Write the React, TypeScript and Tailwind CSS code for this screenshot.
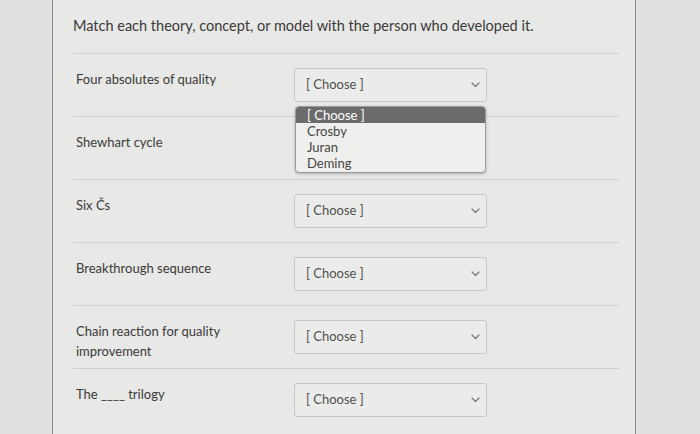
const ROWS = [
  { label: "Four absolutes of quality", open: true },
  { label: "Shewhart cycle", hidden: true },
  { label: "Six Čs" },
  { label: "Breakthrough sequence" },
  { label: "Chain reaction for quality improvement" },
  { label: "The ____ trilogy" },
];

const OPTIONS = ["[ Choose ]", "Crosby", "Juran", "Deming"];

function Chevron() {
  return (
    <svg width="9" height="6" viewBox="0 0 9 6" fill="none" className="shrink-0">
      <path d="M1 1l3.5 3.5L8 1" stroke="#777" strokeWidth="1.2" strokeLinecap="round" strokeLinejoin="round" />
    </svg>
  );
}

function Select({ open, hidden }: { open?: boolean; hidden?: boolean }) {
  return (
    <div className="relative">
      <div
        className={`w-[193px] h-[34px] flex items-center justify-between pl-[11px] pr-[6px] rounded-[3px] border border-[#c6c6c4] bg-[#ebebe9] ${hidden ? "invisible" : ""}`}
      >
        <span className="text-[13px] text-[#505050]">[ Choose ]</span>
        <Chevron />
      </div>
      {open && (
        <div className="absolute z-10 left-[1px] top-[38px] w-[191px] rounded-[4px] border border-[#9a9a98] bg-[#efefed] overflow-hidden shadow-[0_1px_3px_rgba(0,0,0,0.25)] pb-[1px]">
          {OPTIONS.map((o, i) => (
            <div
              key={o}
              className={`h-[16px] leading-[16px] pl-[11px] text-[13px] ${i === 0 ? "bg-[#6b6b6b] text-white" : "text-[#454545]"}`}
            >
              {o}
            </div>
          ))}
        </div>
      )}
    </div>
  );
}

export default function App() {
  return (
    <div
      className="w-[700px] h-[434px] bg-[#e0e0de] overflow-hidden pl-[52px]"
      style={{ fontFamily: "Lato, 'Open Sans', sans-serif" }}
    >
      <div className="w-[584px] h-full bg-[#e8e8e6] border-x border-[#8e8e8c] pl-[20px] pr-[16px]">
        <div className="pt-[14px] pb-[15px] border-b border-[#cfcfcd]">
          <p className="text-[14.5px] leading-[24px] text-[#3a3a3a]">
            Match each theory, concept, or model with the person who developed it.
          </p>
        </div>

        {ROWS.map((r, i) => (
          <div
            key={r.label}
            className={`flex items-start py-[14px] ${i < ROWS.length - 1 ? "border-b border-[#cfcfcd]" : ""}`}
          >
            <p className="w-[221px] h-[34px] pl-[3px] pr-[60px] pt-[1px] text-[13px] leading-[20px] text-[#3a3a3a]">{r.label}</p>
            <Select open={r.open} hidden={r.hidden} />
          </div>
        ))}
      </div>
    </div>
  );
}
